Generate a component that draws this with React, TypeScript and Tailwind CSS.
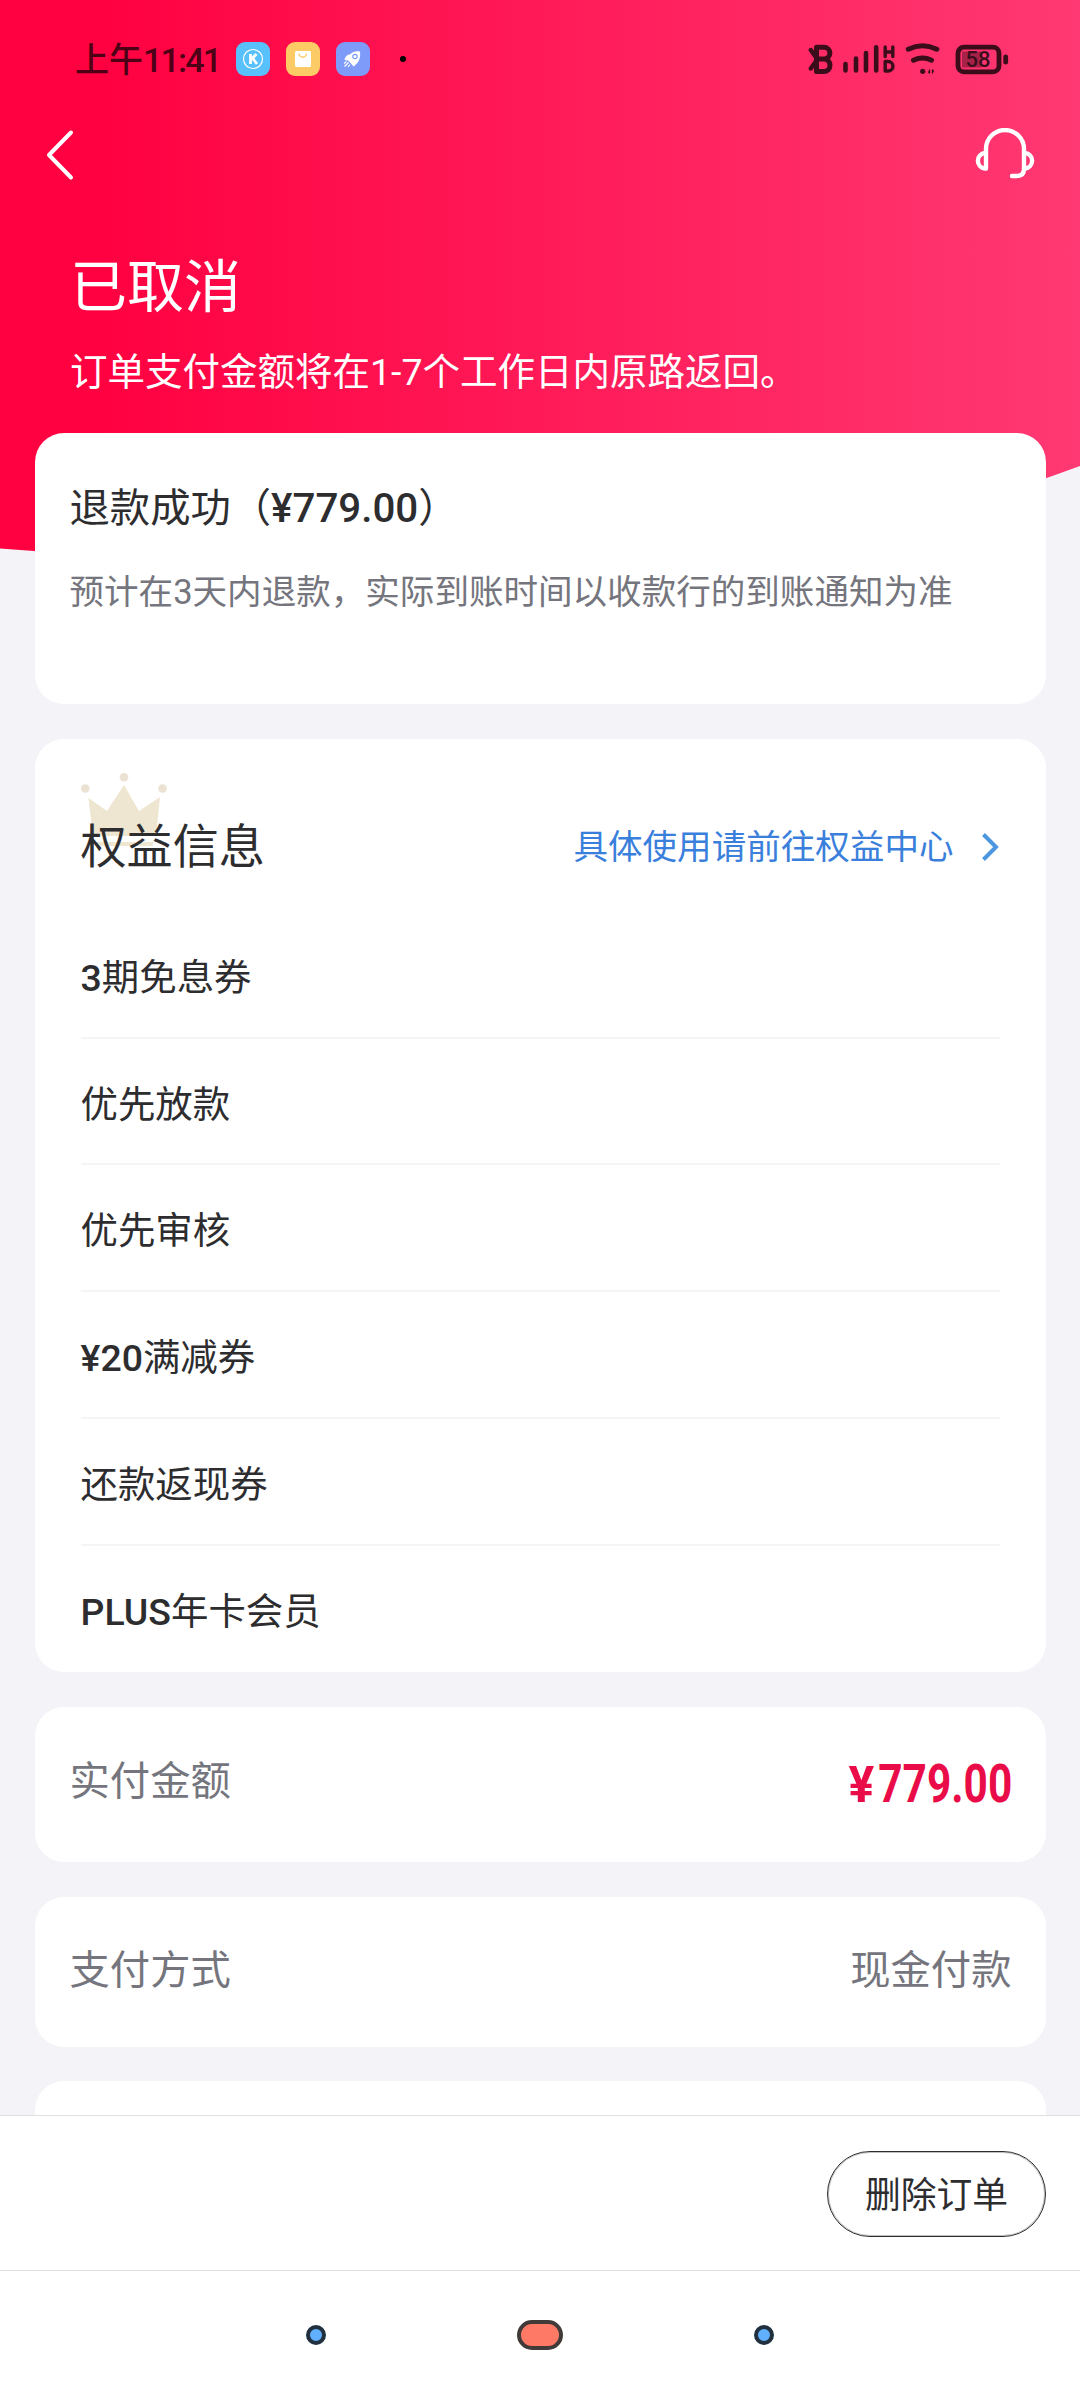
import type { ReactNode } from "react";

type CardType = {
    className: string,
    children?: ReactNode,
}

type InfoType = {
    label: string,
    className: string,
    children: ReactNode,
}

const benefits = ["3期免息券", "优先放款", "优先审核", "¥20满减券", "还款返现券", "PLUS年卡会员"]

// latin letters and numbers are set heavier than the chinese text around them
function Mixed({ text }: { text: string }) {
    return (
        <span>
            {text.split(/([¥A-Z0-9.]+)/).map((part, i) => (
                i % 2 == 1 ? <span key={i} className="font-medium">{part}</span> : part
            ))}
        </span>
    )
}

function Card({ className, children }: CardType) {
    return <section className={`w-[1011px] shrink-0 rounded-[29px] bg-white ${className}`}>{children}</section>
}

function AppIcons() {
    return (
        <div className="ml-[17px] flex gap-4">
            <svg width="34" height="34" viewBox="0 0 34 34" className="rounded-[9px] bg-[#58c0fa]" fill="none" stroke="#fff">
                <circle cx="17" cy="17" r="9.5" strokeWidth="1.2" />
                <path d="M14.5 12v10M20.5 12l-5.5 5.5M16.5 16l4.5 6" strokeWidth="2.8" />
            </svg>
            <svg width="34" height="34" viewBox="0 0 34 34" className="rounded-[9px] bg-[#fccb66]">
                <rect x="9" y="9" width="16" height="16" rx="1.5" fill="#fff" />
                <path d="M13 11.5a3.7 3.7 0 0 0 7.4 0" fill="none" stroke="#fccb66" strokeWidth="1.4" />
            </svg>
            <svg width="34" height="34" viewBox="0 0 34 34" className="rounded-[9px] bg-[#7f9bfa]">
                <path d="M24 9.5c.8 6-1 11.5-6.5 15l-2-2.5-3.5-3.5-3.5-.5c1-4 3-5.5 5.5-5.5C16.5 9.5 20 9 24 9.5Z" fill="#fff" />
                <path d="M12.5 20.5l-4 4M10.5 19.5l-2.5 2M14 22.5l-2 2.5" stroke="#fff" strokeWidth="1.2" />
                <circle cx="19" cy="14.5" r="2.2" fill="#fff" stroke="#7f9bfa" strokeWidth="1.2" />
            </svg>
        </div>
    )
}

function SystemIcons() {
    return (
        <svg width="202" height="34" viewBox="0 0 202 34" fill="none" stroke="#3b0d1b" strokeLinecap="round" strokeLinejoin="round">
            {/* bluetooth */}
            <path d="M8.5 5.2h7.5a5.8 5.8 0 0 1 0 11.8h-7.5zM8.5 17h7.5a6 6.3 0 0 1 0 12.6h-7.5z" strokeWidth="5" />
            <path d="M2.8 8l5 7M2.8 26.500l5-7" strokeWidth="4.4" />
            {/* signal */}
            <path d="M37.5 22v6.500M48 16.500v12M58 11v17.500M68.200 5.200v23.300" strokeWidth="4.6" />
            <path d="M77.2 5v9.500M84.800 5v9.500M77.200 10h7.600M77.200 19.500v9.500h3a4.700 4.700 0 0 0 0-9.500z" strokeWidth="3.4" />
            {/* wifi */}
            <path d="M100.3 7.200a33 33 0 0 1 28.500 0M105.500 18.200a21 21 0 0 1 18 0" strokeWidth="5" />
            <circle cx="114.7" cy="29.3" r="2.6" fill="#3b0d1b" stroke="none" />
            <path d="M121.5 28v3l-1-1M124.500 31v-3l1 1" strokeWidth="1.3" />
            {/* battery */}
            <rect x="150" y="5.2" width="41" height="24.6" rx="6" strokeWidth="4.8" />
            <rect x="154" y="9.5" width="19" height="16" fill="#3b0d1b" fillOpacity=".45" stroke="none" />
            <path d="M197.7 14.800v5.400" strokeWidth="4.8" />
            <text x="170" y="25" textAnchor="middle" fill="#3b0d1b" stroke="none" className="font-['Roboto',sans-serif] text-[22px] font-medium">58</text>
        </svg>
    )
}

function StatusBar() {
    return (
        <div className="flex h-[118px] items-center pr-[70px] pl-[75px]">
            <p className="w-[144px] pt-[2px] text-[34px] leading-none font-medium tracking-[-1.8px] whitespace-nowrap text-[#4d0016]">
                <span className="tracking-normal">上午</span>11:41
            </p>
            <AppIcons />
            <span className="ml-[30px] size-1.5 rounded-full bg-black"></span>
            <div className="ml-auto">
                <SystemIcons />
            </div>
        </div>
    )
}

function Header() {
    return (
        <header className="relative h-[433px] shrink-0">
            <svg className="absolute top-0 left-0" width="1080" height="600" viewBox="0 0 1080 600">
                <defs>
                    <linearGradient id="hero" x1="0" y1="0" x2="1" y2="0">
                        <stop offset="0" stopColor="#ff0040" />
                        <stop offset=".08" stopColor="#ff0040" />
                        <stop offset="1" stopColor="#ff3973" />
                    </linearGradient>
                </defs>
                <path d="M0 0H1080V466Q714 605 0 548.5Z" fill="url(#hero)" />
            </svg>
            <div className="relative">
                <StatusBar />
                <div className="flex h-[74px] items-center justify-between pr-[44px] pl-[45px]">
                    <svg width="30" height="52" viewBox="0 0 30 52" fill="none" stroke="#fff" strokeWidth="4" strokeLinecap="round" strokeLinejoin="round">
                        <path d="M26 3.5L4 26l22 22.5" />
                    </svg>
                    <svg width="62" height="54" viewBox="0 0 62 54" fill="none" stroke="#fff" strokeWidth="4.4" strokeLinecap="round" strokeLinejoin="round">
                        <path d="M12 40V21a19 19 0 0 1 38 0v20q0 7-7 7h-5" />
                        <path d="M12 25h-1a8 7.8 0 0 0 0 15.500h1M50 25h1a8 7.800 0 0 1 0 15.500h-1" />
                    </svg>
                </div>
                <div className="pt-[63px] pl-[70px] text-white">
                    <h1 className="text-[57px] leading-[66px]">已取消</h1>
                    <p className="mt-[24px] text-[37.5px] leading-[54px]">订单支付金额将在1-7个工作日内原路返回。</p>
                </div>
            </div>
        </header>
    )
}

function Refund() {
    return (
        <Card className="relative h-[271px] px-[35px] pt-[48px]">
            <h2 className="text-[40.32px] leading-[56px] text-[#2d2d30]"><Mixed text="退款成功（¥779.00）" /></h2>
            <p className="mt-[30px] text-[34.56px] leading-[50px] text-[#75757e]">预计在3天内退款，实际到账时间以收款行的到账通知为准</p>
        </Card>
    )
}

function Benefits() {
    return (
        <Card className="mt-[35px] h-[932.5px] px-[46px]">
            <div className="relative flex h-[173px] items-center justify-between pt-[43px]">
                <svg className="absolute top-[34px] left-0" width="88" height="76" viewBox="0 0 88 76" fill="#eee6d0">
                    <path d="M7.500 25L26 38 43 12 58 38 79 24 75 63H12Z" />
                    <path d="M15 69h57v4H15Z" />
                    <g fill="#ece2d3">
                        <circle cx="43" cy="4.3" r="4.3" />
                        <circle cx="4.3" cy="15.5" r="4.3" />
                        <circle cx="81.5" cy="15.5" r="4.3" />
                    </g>
                </svg>
                <h2 className="relative text-[46.08px] leading-[60px] text-[#2d2d30]">权益信息</h2>
                <a className="flex items-center gap-[28px] text-[34.56px] leading-[50px] text-[#3b7fdc]">
                    具体使用请前往权益中心
                    <svg width="18" height="30" viewBox="0 0 18 30" fill="none" stroke="#4c98e0" strokeWidth="4">
                        <path d="M1.5 2.500l12.500 12.500L1.500 27.500" />
                    </svg>
                </a>
            </div>
            <ul>
                {benefits.map((name) => (
                    <li key={name} className="flex h-[126.72px] items-center border-b-2 border-[#f5f5f6] pt-[7px] text-[37.44px] text-[#2d2d30] last:border-b-0">
                        <Mixed text={name} />
                    </li>
                ))}
            </ul>
        </Card>
    )
}

function Info({ label, className, children }: InfoType) {
    return (
        <Card className={`mt-[35px] flex justify-between px-[35px] text-[40.32px] leading-[58px] text-[#75757e] ${className}`}>
            <p>{label}</p>
            {children}
        </Card>
    )
}

function Price() {
    return (
        <p className="-mt-px flex origin-right translate-x-[2px] scale-x-[0.8] items-baseline font-['Roboto',sans-serif] text-[53px] leading-[64px] font-bold text-[#ea0c48]">
            <span className="mr-[5px] inline-block origin-right scale-x-[1.2] text-[50px]">¥</span>
            779.00
        </p>
    )
}

export default function App() {
    return (
        <div className="relative flex h-[2400px] w-[1080px] flex-col overflow-hidden bg-[#f3f3f8] font-['Roboto','Noto_Sans_CJK_SC',sans-serif]">
            <div className="flex h-[2115px] flex-col items-center overflow-hidden">
                <div className="w-full shrink-0">
                    <Header />
                </div>
                <Refund />
                <Benefits />
                <Info label="实付金额" className="h-[155px] pt-[46px]">
                    <Price />
                </Info>
                <Info label="支付方式" className="h-[150px] pt-[45px]">
                    <p className="translate-x-px">现金付款</p>
                </Info>
                <Card className="mt-[34px] h-[150px]" />
            </div>
            <div className="flex h-[155px] shrink-0 items-center justify-end border-t border-[#dfdfe2] bg-white pt-[2px] pr-[34px]">
                <button className="h-[86px] w-[219px] rounded-full border border-[#2d2d30] pt-[5px] text-[35.8px] text-[#2d2d30] ring-1 ring-[#2d2d30]/30 ring-inset">删除订单</button>
            </div>
            <nav className="flex h-[130px] shrink-0 items-center justify-center gap-[191px] border-t border-[#dfdfe2] bg-white pb-[2px]">
                <span className="size-5 rounded-full border-4 border-[#22313f] bg-[#61b0ff]"></span>
                <span className="h-[30px] w-[46px] rounded-full border-4 border-[#423a38] bg-[#ff7a66]"></span>
                <span className="size-5 rounded-full border-4 border-[#22313f] bg-[#61b0ff]"></span>
            </nav>
        </div>
    )
}
